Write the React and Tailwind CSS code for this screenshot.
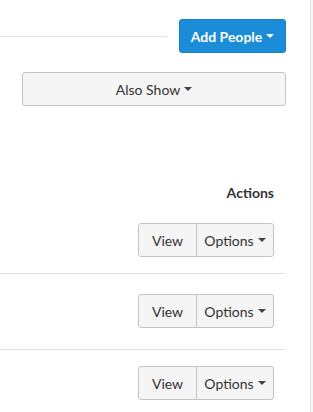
import { useState } from 'react';

const Caret = ({ className = '' }) => (
    <span className={`inline-block ml-1 align-middle border-x-[4px] border-x-transparent border-t-[4px] ${className}`} />
);

export default function App() {
    const [rows] = useState([
        { pt: 'pt-[20px]', pb: 'pb-[16px]' },
        { pt: 'pt-[20px]', pb: 'pb-[21px]' },
        { pt: 'pt-[16px]', pb: 'pb-[12px]' },
    ]);

    return (
        <div className="flex min-h-screen bg-[#f6f6f6] text-[#333]" style={{ fontFamily: 'Lato, "Open Sans", sans-serif' }}>
            <div className="w-[311px] shrink-0 bg-white border-r border-[#e3e3e3] pr-6 pt-[19px]">
                {/* Header */}
                <div className="flex items-center">
                    <div className="flex-1 h-px bg-[#e0e0e0] mr-3" />
                    <button className="h-[34px] w-[107px] rounded-[3px] bg-[#1a8cd8] border border-[#1780c6] text-white text-[14px] font-bold flex items-center justify-center">
                        Add People<Caret className="border-t-white" />
                    </button>
                </div>

                {/* Filter */}
                <div className="mt-[19px] ml-[22px]">
                    <button className="h-[34px] w-full rounded-[3px] bg-[#f5f5f5] border border-[#c4c4c4] text-[14px] text-[#333] flex items-center justify-center">
                        Also Show<Caret className="border-t-[#444]" />
                    </button>
                </div>

                {/* Table */}
                <div className="mt-[77px] pr-3 text-right text-[14px] font-bold leading-5 text-[#333]">Actions</div>

                {rows.map((row, i) => (
                    <div key={i} className={`${row.pt} ${row.pb} ${i < 2 ? 'border-b border-[#e3e3e3]' : ''}`}>
                        <div className="flex justify-end pr-3">
                            <div className="flex h-[34px] rounded-[3px] border border-[#c4c4c4] bg-[#f5f5f5] text-[14px] text-[#333]">
                                <button className="w-[58px] border-r border-[#c4c4c4]">View</button>
                                <button className="w-[76px] flex items-center justify-center">
                                    Options<Caret className="border-t-[#444]" />
                                </button>
                            </div>
                        </div>
                    </div>
                ))}
            </div>
        </div>
    );
}
